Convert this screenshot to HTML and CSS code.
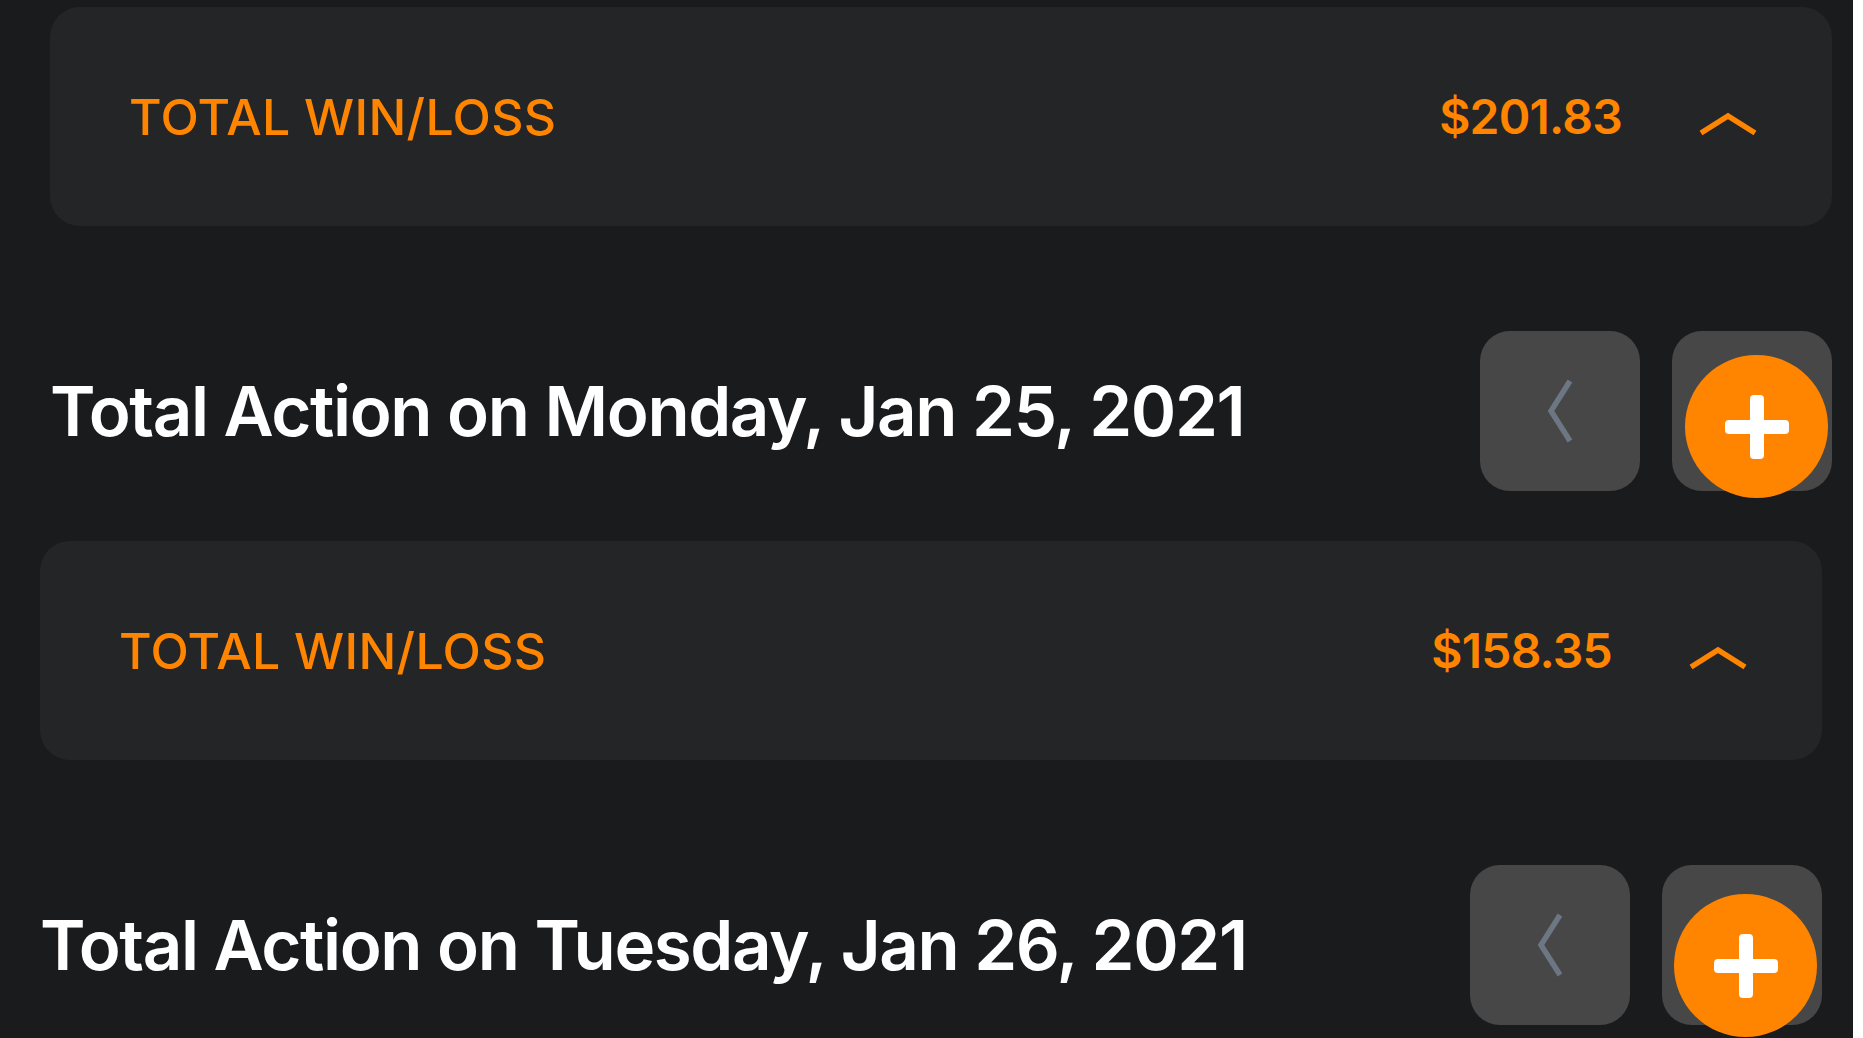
FILE: index.html
```html
<!DOCTYPE html>
<html>
<head>
<meta charset="utf-8">
<link rel="stylesheet" href="styles.css">
</head>
<body>
<main class="screen">
  <section class="day day-one">
    <div class="summary">
      <span class="summary-label">TOTAL WIN/LOSS</span>
      <div class="summary-right">
        <span class="summary-amount">$201.83</span>
        <svg class="chev-up" viewBox="0 0 58 24" width="58" height="24"><path d="M2 21 L29 4 L56 21" fill="none" stroke="#ff8500" stroke-width="5.5" stroke-linejoin="miter"/></svg>
      </div>
    </div>
    <div class="action-row">
      <h2 class="action-title">Total Action on Monday, Jan 25, 2021</h2>
      <div class="action-buttons">
        <button class="square-btn"><svg viewBox="0 0 26 64" width="26" height="64"><path d="M23 2 L4 32 L23 62" fill="none" stroke="#6d7683" stroke-width="5.5" stroke-linejoin="miter"/></svg></button>
        <div class="square-btn add-wrap">
          <button class="add-btn"><span class="plus"></span></button>
        </div>
      </div>
    </div>
  </section>
  <section class="day day-two">
    <div class="summary">
      <span class="summary-label">TOTAL WIN/LOSS</span>
      <div class="summary-right">
        <span class="summary-amount">$158.35</span>
        <svg class="chev-up" viewBox="0 0 58 24" width="58" height="24"><path d="M2 21 L29 4 L56 21" fill="none" stroke="#ff8500" stroke-width="5.5" stroke-linejoin="miter"/></svg>
      </div>
    </div>
    <div class="action-row">
      <h2 class="action-title">Total Action on Tuesday, Jan 26, 2021</h2>
      <div class="action-buttons">
        <button class="square-btn"><svg viewBox="0 0 26 64" width="26" height="64"><path d="M23 2 L4 32 L23 62" fill="none" stroke="#6d7683" stroke-width="5.5" stroke-linejoin="miter"/></svg></button>
        <div class="square-btn add-wrap add-wrap-two">
          <button class="add-btn"><span class="plus"></span></button>
        </div>
      </div>
    </div>
  </section>
</main>
</body>
</html>
```

FILE: styles.css
```css
html, body {
  margin: 0;
  padding: 0;
  background: #ffffff;
  overflow: hidden;
}

.screen {
  width: 1853px;
  height: 1038px;
  background: #1a1b1d;
  font-family: "Inter", "Open Sans", sans-serif;
  overflow: hidden;
}

.day {
  display: flex;
  flex-direction: column;
}

.day-one {
  margin-left: 50px;
  width: 1782px;
  padding-top: 7px;
}

.day-two {
  margin-left: 40px;
  width: 1782px;
  padding-top: 50px;
}

.summary {
  height: 219px;
  background: #242527;
  border-radius: 30px;
  display: flex;
  align-items: center;
  justify-content: space-between;
  padding: 0 75px 0 79px;
  box-sizing: border-box;
}

.summary-label {
  color: #ff8500;
  font-size: 50px;
  font-weight: 500;
  letter-spacing: 0.3px;
}

.summary-right {
  display: flex;
  align-items: center;
  gap: 77px;
}

.summary-amount {
  color: #ff8500;
  font-size: 48px;
  font-weight: 600;
  letter-spacing: -0.8px;
}

.chev-up {
  display: block;
  margin-top: 14px;
}

.action-row {
  margin-top: 105px;
  display: flex;
  align-items: center;
  justify-content: space-between;
}

.action-title {
  margin: 0;
  color: #ffffff;
  font-size: 69px;
  font-weight: 600;
  letter-spacing: -1.4px;
}

.action-buttons {
  display: flex;
  gap: 32px;
}

.square-btn {
  width: 160px;
  height: 160px;
  border: none;
  border-radius: 30px;
  background: #474747;
  display: flex;
  align-items: center;
  justify-content: center;
  padding: 0;
}

.add-wrap {
  position: relative;
}

.add-btn {
  position: absolute;
  left: 13px;
  top: 24px;
  width: 143px;
  height: 143px;
  border-radius: 50%;
  border: none;
  background: #ff8500;
  padding: 0;
  display: flex;
  align-items: center;
  justify-content: center;
}

.add-wrap-two .add-btn {
  left: 12px;
  top: 29px;
}

.plus {
  position: relative;
  width: 64px;
  height: 64px;
  display: block;
}

.plus::before,
.plus::after {
  content: "";
  position: absolute;
  background: #ffffff;
  border-radius: 4px;
}

.plus::before {
  left: 0;
  top: 25px;
  width: 64px;
  height: 14px;
}

.plus::after {
  left: 25px;
  top: 0;
  width: 14px;
  height: 64px;
}
```
